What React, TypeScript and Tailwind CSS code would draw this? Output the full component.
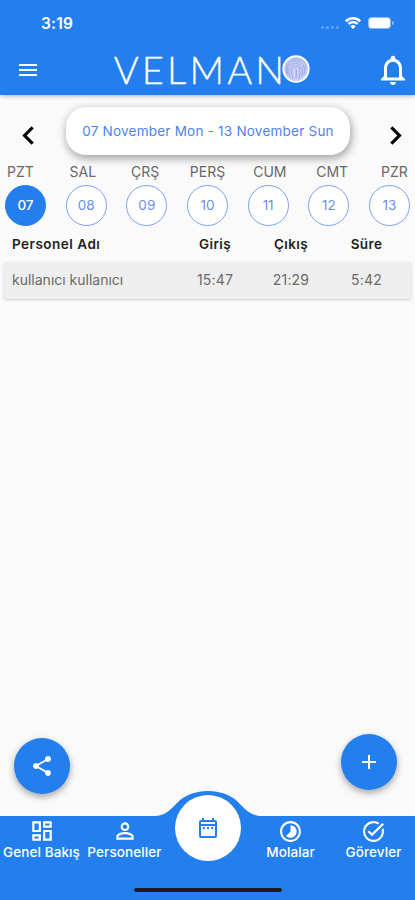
import type { IconType } from "react-icons"
import {
    MdAdd,
    MdChevronLeft,
    MdChevronRight,
    MdMenu,
    MdNotificationsNone,
    MdOutlineDashboard,
    MdOutlineDateRange,
    MdPersonOutline,
    MdShare,
    MdTaskAlt,
    MdTimelapse
} from "react-icons/md"


type Day = {
    label: string,
    date: string
}

type Shift = {
    name: string,
    start: string,
    end: string,
    total: string
}

type NavItem = {
    title: string,
    icon: IconType,
    size: number
}


const days: Day[] = [
    { label: "PZT", date: "07" },
    { label: "SAL", date: "08" },
    { label: "ÇRŞ", date: "09" },
    { label: "PERŞ", date: "10" },
    { label: "CUM", date: "11" },
    { label: "CMT", date: "12" },
    { label: "PZR", date: "13" }
]

const shifts: Shift[] = [
    { name: "kullanıcı kullanıcı", start: "15:47", end: "21:29", total: "5:42" }
]

const leftNav: NavItem[] = [
    { title: "Genel Bakış", icon: MdOutlineDashboard, size: 26 },
    { title: "Personeller", icon: MdPersonOutline, size: 26 }
]

const rightNav: NavItem[] = [
    { title: "Molalar", icon: MdTimelapse, size: 25 },
    { title: "Görevler", icon: MdTaskAlt, size: 25 }
]


const StatusBar = () => (
    <div className="flex h-[46px] items-center justify-between pr-[21px] pl-[41px]">
        <span className="mt-px text-[15.500px] font-semibold tracking-[0.200px]">3:19</span>
        <div className="flex items-center">
            <div className="mt-[8px] mr-[6px] flex gap-[2px] opacity-30">
                {[0, 1, 2, 3].map((dot) => <i key={dot} className="h-[3px] w-[3px] rounded-full bg-white" />)}
            </div>
            <svg className="h-[12px] w-[16px]" viewBox="0 0 16 12" fill="none" stroke="white" strokeWidth="2.4">
                <path d="M.8 4.3a10.2 10.2 0 0 1 14.400 0" />
                <path d="M3.4 7a6.500 6.500 0 0 1 9.200 0" />
                <path d="M8 12 5.400 9.400a3.700 3.700 0 0 1 5.200 0z" fill="white" stroke="none" />
            </svg>
            <div className="ml-[7px] flex items-center">
                <div className="h-[12px] w-[23px] rounded-[4px] bg-[#8bb8f7] p-px">
                    <div className="h-full rounded-[3px] bg-white" />
                </div>
                <div className="ml-px h-[4px] w-[2px] rounded-r-full bg-[#8bb8f7]" />
            </div>
        </div>
    </div>
)

const Logo = () => (
    <div className="-mt-[3px] ml-[9px] flex items-center">
        <span className="font-['Lato',sans-serif] text-[38px] leading-none font-light tracking-[3.200px] [-webkit-text-stroke:0.3px_white]">VELMAN</span>
        <svg className="-ml-[5px] h-[28px] w-[28px]" viewBox="0 0 28 28" fill="none">
            <circle cx="14" cy="14" r="12.800" fill="#c9d0f5" stroke="white" strokeWidth="1.700" />
            <g stroke="#8b9be0" strokeWidth=".8" strokeLinecap="round" strokeDasharray="4 1">
                <path d="M4.500 18c-2-8 3-14 9.500-14 6 0 10.500 4 10 10" />
                <path d="M6 20C3 12 8 6 14 6s10 6 8 13" />
                <path d="M8 22C5 14 8 8.500 14 8.500s8 7 5.500 13.500" />
                <path d="M11 23.500c-3-7-2-12.500 3-12.500s4.500 6 3 12.500" />
                <path d="M14 14c1 3 0 6 0 9" />
            </g>
        </svg>
    </div>
)

const Header = () => (
    <header className="relative z-10 h-[95px] bg-[#247fee] text-white shadow-[0_1px_4px_rgba(0,0,0,0.3)]">
        <StatusBar />
        <div className="flex h-[48px] items-center justify-between pr-[4px] pl-[16px]">
            <MdMenu size={24} />
            <Logo />
            <MdNotificationsNone size={36} />
        </div>
    </header>
)

const WeekPicker = () => (
    <div className="flex h-[48px] items-center px-[10px]">
        <MdChevronLeft size={37} className="mt-[8px] text-black" />
        <div className="ml-[19px] flex h-[48px] w-[284px] items-center justify-center rounded-[20px] bg-white text-[13.500px] tracking-[0.230px] text-[#4c83ee] shadow-[1px_3px_10px_rgba(0,0,0,0.4)]">
            07 November Mon - 13 November Sun
        </div>
        <MdChevronRight size={37} className="mt-[8px] -mr-[9px] ml-auto text-black" />
    </div>
)

const DayStrip = () => (
    <div>
        <div className="mt-[6px] flex h-[20px] items-center justify-between px-[7px] text-[14px] text-[#686868]">
            {days.map(({ label }) => (
                <span key={label} className="flex w-[27px] justify-center whitespace-nowrap">{label}</span>
            ))}
        </div>
        <div className="mt-[4px] flex justify-between px-[5px]">
            {days.map(({ date }, index) => (
                <div
                    key={date}
                    className={`flex h-[41px] w-[41px] items-center justify-center rounded-full border text-[13.500px] ${index === 0 ? "border-[#247fee] bg-[#247fee] font-medium text-white" : "border-[#7d9ff0] bg-white text-[#6a8eec]"}`}
                >
                    {date}
                </div>
            ))}
        </div>
    </div>
)

const ShiftTable = () => (
    <div className="px-[4px]">
        <div className="grid h-[36px] grid-cols-[172px_78px_74px_77px] items-center text-[13.500px] font-semibold text-[#222]">
            <span className="pl-[8px] tracking-[0.500px]">Personel Adı</span>
            <span className="text-center tracking-[0.400px]">Giriş</span>
            <span className="text-center tracking-[0.400px]">Çıkış</span>
            <span className="text-center tracking-[0.400px]">Süre</span>
        </div>
        {shifts.map((shift) => (
            <div key={shift.name} className="grid h-[37px] grid-cols-[172px_78px_74px_77px] items-center rounded-[3px] bg-[#eee] pb-[2px] text-[14px] text-[#6a6a6a] shadow-[0_1px_3px_rgba(0,0,0,0.18)]">
                <span className="pl-[8px]">{shift.name}</span>
                <span className="text-center tracking-[0.200px]">{shift.start}</span>
                <span className="text-center tracking-[0.200px]">{shift.end}</span>
                <span className="text-center tracking-[0.200px]">{shift.total}</span>
            </div>
        ))}
    </div>
)

const NavButton = ({ title, icon: Icon, size }: NavItem) => (
    <div className="flex flex-col items-center">
        <div className="mt-[2px] flex h-[26px] items-center"><Icon size={size} /></div>
        <span className="text-[13.500px] leading-[16px] font-medium tracking-[0.100px] whitespace-nowrap">{title}</span>
    </div>
)

const BottomNav = () => (
    <nav className="relative h-[84px] bg-[#247fee] text-white">
        {/* raised shoulder behind the round calendar button */}
        <svg className="absolute -top-[25px] left-[148px] h-[26px] w-[120px]" viewBox="0 0 120 26">
            <path d="M6 26V25C18 25 24 17 30 11S46 0 60 0s24 5 30 11 12 14 24 14v1z" fill="#247fee" />
        </svg>
        <div className="grid grid-cols-5">
            {leftNav.map((item) => <NavButton key={item.title} {...item} />)}
            <div className="relative flex justify-center">
                <div className="-mt-[21px] flex h-[66px] w-[66px] items-center justify-center rounded-full bg-white text-[#247fee]">
                    <MdOutlineDateRange size={24} />
                </div>
            </div>
            {rightNav.map((item) => <NavButton key={item.title} {...item} />)}
        </div>
        <div className="mx-auto mt-[27px] h-[4px] w-[148px] rounded-full bg-[#1b1d1c]" />
    </nav>
)

const App = () => {
    return (
        <div className="flex h-[900px] w-[415px] flex-col overflow-hidden bg-[#fafafa] font-['Inter',sans-serif]">
            <Header />
            <main className="flex flex-1 flex-col pt-[12px]">
                <WeekPicker />
                <DayStrip />
                <ShiftTable />
                <div className="mt-auto flex items-start justify-between pr-[18px] pb-[22px] pl-[14px] text-white">
                    <div className="mt-[4px] flex h-[56px] w-[56px] items-center justify-center rounded-full bg-[#247fee] shadow-[0_3px_7px_rgba(0,0,0,0.35)]">
                        <MdShare size={24} />
                    </div>
                    <div className="flex h-[56px] w-[56px] items-center justify-center rounded-full bg-[#247fee] shadow-[0_3px_7px_rgba(0,0,0,0.35)]">
                        <MdAdd size={24} />
                    </div>
                </div>
            </main>
            <BottomNav />
        </div>
    )
}

export default App
